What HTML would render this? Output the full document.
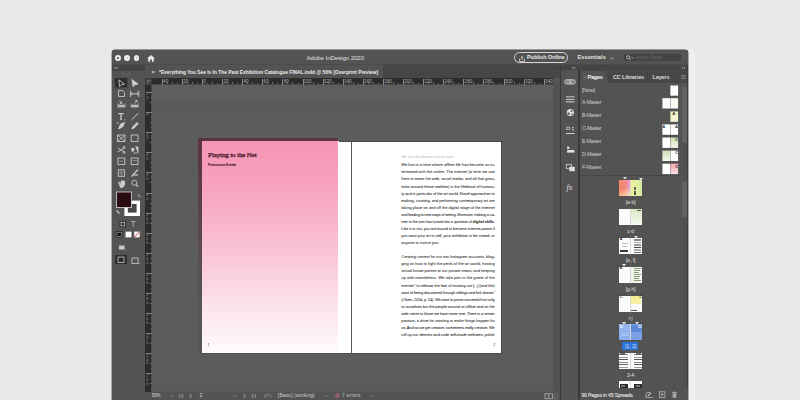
<!DOCTYPE html>
<html><head><meta charset="utf-8">
<style>
*{margin:0;padding:0;box-sizing:border-box}
html,body{width:800px;height:400px;overflow:hidden;background:#e8e8e8;font-family:"Liberation Sans",sans-serif}
.a{position:absolute}
.t{position:absolute;white-space:nowrap;line-height:1}
svg{position:absolute;overflow:visible}
</style></head><body>
<div class="a" style="left:110.6px;top:48.8px;width:584px;height:352px;border-radius:4px 4px 0 0;background:#efefef"></div>
<div class="a" style="left:111.6px;top:49.8px;width:576.7px;height:350.2px;background:#535353;border-radius:3px 3px 0 0;box-shadow:0 0 0 0.4px #444"></div>
<div class="a" style="left:112px;top:64.3px;width:576.3px;height:0.7px;background:#4b4b4b;"></div>
<div class="a" style="left:115.35px;top:55.1px;width:5.8px;height:5.8px;border-radius:50%;background:#ededed"></div>
<div class="a" style="left:124.39999999999999px;top:55.1px;width:5.8px;height:5.8px;border-radius:50%;background:#ededed"></div>
<div class="a" style="left:133.5px;top:55.1px;width:5.8px;height:5.8px;border-radius:50%;background:#ededed"></div>
<div class="a" style="left:117.4px;top:57.2px;width:1.7px;height:1.7px;border-radius:50%;background:#5a5a5a"></div>
<div class="a" style="left:126.6px;top:57.4px;width:1.4px;height:1.2px;background:#c8c8c8"></div>
<div class="a" style="left:135.7px;top:57.4px;width:1.4px;height:1.2px;background:#c8c8c8"></div>
<svg style="left:147.2px;top:54.6px" width="8" height="7" viewBox="0 0 8 7"><path d="M4 0 L8 3.6 L6.8 3.6 L6.8 6.7 L4.9 6.7 L4.9 4.6 L3.1 4.6 L3.1 6.7 L1.2 6.7 L1.2 3.6 L0 3.6 Z" fill="#e8e8e8"/></svg>
<div class="t" style="left:306.60px;top:54.52px;font-size:6.0px;color:#e2e2e2;letter-spacing:-0.018px;">Adobe InDesign 2020</div>
<div class="a" style="left:513.9px;top:51.9px;width:54.5px;height:11.6px;border:0.9px solid #d6d6d6;border-radius:6px"></div>
<svg style="left:518.6px;top:55.6px" width="6" height="6" viewBox="0 0 6 6"><path d="M0.5 2.8 V5.5 H5.5 V2.8 M3 4 V0.5 M1.7 1.7 L3 0.5 L4.3 1.7" stroke="#d8d8d8" stroke-width="0.75" fill="none"/></svg>
<div class="t" style="left:527.00px;top:55.23px;font-size:5.4px;color:#ececec;font-weight:bold;letter-spacing:-0.001px;">Publish Online</div>
<div class="t" style="left:577.50px;top:55.06px;font-size:5.6px;color:#e6e6e6;font-weight:bold;letter-spacing:0.064px;">Essentials</div>
<svg style="left:609.5px;top:57.2px" width="4" height="3" viewBox="0 0 4 3"><path d="M0.3 0.5 L2 2.2 L3.7 0.5" stroke="#cfcfcf" stroke-width="0.7" fill="none"/></svg>
<div class="a" style="left:624px;top:53.8px;width:57.2px;height:7.6px;background:#434343;border-radius:1px"></div>
<svg style="left:625.5px;top:55px" width="9" height="6" viewBox="0 0 9 6"><circle cx="2.3" cy="2.3" r="1.6" stroke="#d6d6d6" stroke-width="0.75" fill="none"/><path d="M3.4 3.4 L4.7 4.8 M5.6 2.3 L6.5 3.2 L7.4 2.3" stroke="#d6d6d6" stroke-width="0.7" fill="none"/></svg>
<div class="t" style="left:635.00px;top:55.37px;font-size:5.0px;color:#6a6a6a;letter-spacing:-0.136px;">Adobe Stock</div>
<div class="a" style="left:112px;top:65px;width:33px;height:5.5px;background:#454545;"></div>
<div class="t" style="left:114.30px;top:64.94px;font-size:5.5px;color:#b0b0b0;font-weight:bold;">‹‹</div>
<div class="t" style="left:121.50px;top:72.44px;font-size:4.2px;color:#6e6e6e;">Tools</div>
<div class="a" style="left:144.5px;top:65px;width:0.8px;height:335px;background:#3f3f3f;"></div>
<svg style="left:112px;top:76px" width="33" height="195" viewBox="0 0 33 195">
 <g fill="none" stroke="#cdcdcd" stroke-width="0.85">
  <rect x="3" y="2" width="12.3" height="9.4" fill="#2c2c2c" stroke="none"/>
  <path d="M6.8 3.8 L12.6 8.2 L9.6 8.6 L7.6 10.6 Z"/>
  <path d="M20 3.6 L26 8.1 L23 8.6 L21.2 10.8 Z" fill="#cdcdcd"/>
  <!-- page tool -->
  <path d="M6.5 14.5 H10.5 L12.5 16.5 V20.5 H6.5 Z"/>
  <!-- gap tool -->
  <path d="M18.5 14.5 V21 M26.8 14.5 V21 M19 17.8 H26.3 M20.5 16.5 L19 17.8 L20.5 19.1 M24.8 16.5 L26.3 17.8 L24.8 19.1"/>
  <!-- collector -->
  <path d="M6 27.5 V31 H13 V27.5" stroke-width="0.8"/><rect x="6.6" y="28.8" width="5.8" height="1.8" fill="#cdcdcd" stroke="none"/>
  <path d="M7.3 24.6 L9.6 27.4 M9.6 25.6 V27.4 H7.8" stroke-width="0.9"/>
  <path d="M19.2 27.5 V31 H26.2 V27.5" stroke-width="0.8"/><rect x="19.8" y="28.8" width="5.8" height="1.8" fill="#cdcdcd" stroke="none"/>
  <path d="M22.6 27.4 L25 24.6 M23.2 24.6 H25 V26.4" stroke-width="0.9"/>
  <!-- type -->
  <path d="M6.3 37.6 H11.7 M9 37.6 V43.6" stroke-width="1.3"/><path d="M7.9 43.6 H10.1" stroke-width="0.7"/><rect x="12.6" y="43.4" width="0.9" height="0.9" fill="#ccc" stroke="none"/>
  <path d="M19.6 43.8 L26.3 37.2" stroke-width="1"/>
  <!-- pen -->
  <path d="M6.5 53 L8.5 48 L12.5 46.5 L11 50.5 Z" fill="#cdcdcd"/><path d="M4.5 47 H7"/>
  <path d="M19.8 53 L20.5 51 L25 46.5 L26.3 47.8 L21.8 52.3 Z" fill="#cdcdcd"/>
  <!-- frame X -->
  <path d="M5.5 59 H13 V65.5 H5.5 Z M5.5 59 L13 65.5 M13 59 L5.5 65.5"/>
  <rect x="19.2" y="59" width="6.8" height="6.5"/>
  <!-- scissors -->
  <path d="M5.5 72 L12.5 76 M5.5 76 L12.5 72"/><circle cx="12" cy="71.5" r="1" /><circle cx="12" cy="76.5" r="1"/>
  <path d="M19.5 72 L22.5 73 L20.5 76 Z M23.5 71 H26 V77 M21.5 77 H25.5" fill="#cdcdcd"/>
  <!-- gradient -->
  <rect x="6" y="82" width="6.8" height="6.5"/><path d="M7.5 85.2 H11.3" stroke="#999"/>
  <rect x="19.2" y="82" width="6.8" height="6.5"/><path d="M20.5 84.5 H25" stroke="#999"/>
  <!-- note -->
  <rect x="6.3" y="93.8" width="6.2" height="6.5"/><path d="M7.5 96 H11.3 M7.5 98 H11.3 M9.3 94.5 V99.8" stroke="#aaa" stroke-width="0.6"/>
  <path d="M19.5 100.5 L24.5 95 L26 93.5 M21 99 L26 98.8" stroke-width="1.2"/>
  <!-- hand -->
  <path d="M6.5 105.8 L9 108.5 V105 H12.5 V109 L10.5 111.5 H8.5 Z" fill="#cdcdcd"/>
  <circle cx="22.3" cy="106.8" r="2.5"/><path d="M24 108.6 L26 110.6" stroke-width="1.2"/>
 </g>
 <!-- fill & stroke -->
 <rect x="12.4" y="124.6" width="15.6" height="15.4" fill="#ffffff"/>
 <rect x="15.8" y="128" width="8.8" height="8.6" fill="#474747"/>
 <rect x="4.4" y="116" width="15.2" height="15.4" fill="#2a0c12" stroke="#d8d8d8" stroke-width="0.8"/>
 <path d="M25.5 119 Q28 118.5 28 121.5" stroke="#ccc" stroke-width="0.8" fill="none"/>
 <path d="M4.5 134.5 L7.5 137.5" stroke="#ccc" stroke-width="1.2"/>
 <!-- formatting -->
 <rect x="7.5" y="145.2" width="6.7" height="6" fill="#303030"/>
 <rect x="9" y="146.5" width="3.7" height="3.4" fill="none" stroke="#ccc" stroke-width="0.7"/>
 <path d="M19 145.5 H23.5 M21.2 145.5 V151" stroke="#aaa" stroke-width="1"/>
 <!-- apply -->
 <rect x="3.7" y="155" width="6.8" height="6.7" fill="#303030"/>
 <rect x="5" y="156.3" width="4.2" height="4.1" fill="#111" stroke="#bbb" stroke-width="0.5"/>
 <rect x="13.5" y="155.6" width="6" height="5.8" fill="#fafafa"/>
 <rect x="22.2" y="155.6" width="5.5" height="5.8" fill="#fafafa"/>
 <path d="M22.4 161.2 L27.6 155.8" stroke="#d03030" stroke-width="0.9"/>
 <!-- screen mode -->
 <rect x="7" y="169" width="5.5" height="4.5" fill="#cfcfcf"/><rect x="7" y="169" width="5.5" height="1.2" fill="#8a8a8a"/><rect x="13.5" y="173.5" width="0.9" height="0.9" fill="#bbb"/>
 <!-- view mode -->
 <rect x="3.3" y="179" width="11.7" height="9" fill="#2c2c2c"/>
 <rect x="6" y="181" width="6" height="5.5" fill="none" stroke="#ccc" stroke-width="0.8"/>
 <rect x="20" y="182" width="6" height="5.5" fill="none" stroke="#ccc" stroke-width="0.8"/>
 <rect x="26.5" y="187" width="1" height="1" fill="#ccc"/>
</svg>
<div class="a" style="left:145.3px;top:65px;width:415px;height:13px;background:#464646;"></div>
<div class="a" style="left:145.3px;top:65px;width:237.7px;height:13px;background:#535353;"></div>
<div class="t" style="left:151.50px;top:69.86px;font-size:5.6px;color:#cfcfcf;font-weight:bold;">×</div>
<div class="t" style="left:159.20px;top:70.16px;font-size:5.6px;color:#ececec;font-weight:bold;transform:scaleX(0.8652);transform-origin:0 0;">*Everything You See Is In The Past Exhibition Catalogue FINAL.indd @ 50% [Overprint Preview]</div>
<div class="a" style="left:145.3px;top:78px;width:407.7px;height:7px;background:#2c2c2c;"></div>
<div class="a" style="left:145.3px;top:78px;width:6.7px;height:314px;background:#2c2c2c;"></div>
<div class="a" style="left:152px;top:84.4px;width:401px;height:0.6px;background:#4a4a4a;"></div>
<div class="a" style="left:145.3px;top:78px;width:6.7px;height:7px;background:#3e3e3e;"></div>
<svg style="left:146.3px;top:79px" width="5" height="5" viewBox="0 0 5 5"><path d="M0.5 2 H4.5 M2 0.5 V4.5 M0.5 4 H2 M4 0.5 V2" stroke="#8a8a8a" stroke-width="0.6" fill="none"/></svg>
<div class="a" style="left:151.4px;top:85px;width:0.6px;height:307px;background:#4a4a4a;"></div>
<div class="a" style="left:161.8px;top:78.5px;width:0.6px;height:6px;background:#8a8a8a;"></div>
<div class="t" style="left:163.10px;top:79.71px;font-size:4.6px;color:#b0b0b0;">40</div>
<div class="a" style="left:166.8px;top:83.2px;width:0.5px;height:1.2px;background:#6a6a6a;"></div>
<div class="a" style="left:171.8px;top:82.4px;width:0.5px;height:2px;background:#6a6a6a;"></div>
<div class="a" style="left:176.9px;top:83.2px;width:0.5px;height:1.2px;background:#6a6a6a;"></div>
<div class="a" style="left:181.9px;top:78.5px;width:0.6px;height:6px;background:#8a8a8a;"></div>
<div class="t" style="left:183.20px;top:79.71px;font-size:4.6px;color:#b0b0b0;">20</div>
<div class="a" style="left:186.9px;top:83.2px;width:0.5px;height:1.2px;background:#6a6a6a;"></div>
<div class="a" style="left:191.9px;top:82.4px;width:0.5px;height:2px;background:#6a6a6a;"></div>
<div class="a" style="left:197.0px;top:83.2px;width:0.5px;height:1.2px;background:#6a6a6a;"></div>
<div class="a" style="left:202.0px;top:78.5px;width:0.6px;height:6px;background:#8a8a8a;"></div>
<div class="t" style="left:203.30px;top:79.71px;font-size:4.6px;color:#b0b0b0;">0</div>
<div class="a" style="left:207.0px;top:83.2px;width:0.5px;height:1.2px;background:#6a6a6a;"></div>
<div class="a" style="left:212.0px;top:82.4px;width:0.5px;height:2px;background:#6a6a6a;"></div>
<div class="a" style="left:217.1px;top:83.2px;width:0.5px;height:1.2px;background:#6a6a6a;"></div>
<div class="a" style="left:222.1px;top:78.5px;width:0.6px;height:6px;background:#8a8a8a;"></div>
<div class="t" style="left:223.40px;top:79.71px;font-size:4.6px;color:#b0b0b0;">20</div>
<div class="a" style="left:227.1px;top:83.2px;width:0.5px;height:1.2px;background:#6a6a6a;"></div>
<div class="a" style="left:232.1px;top:82.4px;width:0.5px;height:2px;background:#6a6a6a;"></div>
<div class="a" style="left:237.2px;top:83.2px;width:0.5px;height:1.2px;background:#6a6a6a;"></div>
<div class="a" style="left:242.2px;top:78.5px;width:0.6px;height:6px;background:#8a8a8a;"></div>
<div class="t" style="left:243.50px;top:79.71px;font-size:4.6px;color:#b0b0b0;">40</div>
<div class="a" style="left:247.2px;top:83.2px;width:0.5px;height:1.2px;background:#6a6a6a;"></div>
<div class="a" style="left:252.2px;top:82.4px;width:0.5px;height:2px;background:#6a6a6a;"></div>
<div class="a" style="left:257.3px;top:83.2px;width:0.5px;height:1.2px;background:#6a6a6a;"></div>
<div class="a" style="left:262.3px;top:78.5px;width:0.6px;height:6px;background:#8a8a8a;"></div>
<div class="t" style="left:263.60px;top:79.71px;font-size:4.6px;color:#b0b0b0;">60</div>
<div class="a" style="left:267.3px;top:83.2px;width:0.5px;height:1.2px;background:#6a6a6a;"></div>
<div class="a" style="left:272.3px;top:82.4px;width:0.5px;height:2px;background:#6a6a6a;"></div>
<div class="a" style="left:277.4px;top:83.2px;width:0.5px;height:1.2px;background:#6a6a6a;"></div>
<div class="a" style="left:282.4px;top:78.5px;width:0.6px;height:6px;background:#8a8a8a;"></div>
<div class="t" style="left:283.70px;top:79.71px;font-size:4.6px;color:#b0b0b0;">80</div>
<div class="a" style="left:287.4px;top:83.2px;width:0.5px;height:1.2px;background:#6a6a6a;"></div>
<div class="a" style="left:292.4px;top:82.4px;width:0.5px;height:2px;background:#6a6a6a;"></div>
<div class="a" style="left:297.5px;top:83.2px;width:0.5px;height:1.2px;background:#6a6a6a;"></div>
<div class="a" style="left:302.5px;top:78.5px;width:0.6px;height:6px;background:#8a8a8a;"></div>
<div class="t" style="left:303.80px;top:79.71px;font-size:4.6px;color:#b0b0b0;">100</div>
<div class="a" style="left:307.5px;top:83.2px;width:0.5px;height:1.2px;background:#6a6a6a;"></div>
<div class="a" style="left:312.5px;top:82.4px;width:0.5px;height:2px;background:#6a6a6a;"></div>
<div class="a" style="left:317.6px;top:83.2px;width:0.5px;height:1.2px;background:#6a6a6a;"></div>
<div class="a" style="left:322.6px;top:78.5px;width:0.6px;height:6px;background:#8a8a8a;"></div>
<div class="t" style="left:323.90px;top:79.71px;font-size:4.6px;color:#b0b0b0;">120</div>
<div class="a" style="left:327.6px;top:83.2px;width:0.5px;height:1.2px;background:#6a6a6a;"></div>
<div class="a" style="left:332.6px;top:82.4px;width:0.5px;height:2px;background:#6a6a6a;"></div>
<div class="a" style="left:337.7px;top:83.2px;width:0.5px;height:1.2px;background:#6a6a6a;"></div>
<div class="a" style="left:342.7px;top:78.5px;width:0.6px;height:6px;background:#8a8a8a;"></div>
<div class="t" style="left:344.00px;top:79.71px;font-size:4.6px;color:#b0b0b0;">140</div>
<div class="a" style="left:347.7px;top:83.2px;width:0.5px;height:1.2px;background:#6a6a6a;"></div>
<div class="a" style="left:352.7px;top:82.4px;width:0.5px;height:2px;background:#6a6a6a;"></div>
<div class="a" style="left:357.8px;top:83.2px;width:0.5px;height:1.2px;background:#6a6a6a;"></div>
<div class="a" style="left:362.8px;top:78.5px;width:0.6px;height:6px;background:#8a8a8a;"></div>
<div class="t" style="left:364.10px;top:79.71px;font-size:4.6px;color:#b0b0b0;">160</div>
<div class="a" style="left:367.8px;top:83.2px;width:0.5px;height:1.2px;background:#6a6a6a;"></div>
<div class="a" style="left:372.8px;top:82.4px;width:0.5px;height:2px;background:#6a6a6a;"></div>
<div class="a" style="left:377.9px;top:83.2px;width:0.5px;height:1.2px;background:#6a6a6a;"></div>
<div class="a" style="left:382.9px;top:78.5px;width:0.6px;height:6px;background:#8a8a8a;"></div>
<div class="t" style="left:384.20px;top:79.71px;font-size:4.6px;color:#b0b0b0;">180</div>
<div class="a" style="left:387.9px;top:83.2px;width:0.5px;height:1.2px;background:#6a6a6a;"></div>
<div class="a" style="left:392.9px;top:82.4px;width:0.5px;height:2px;background:#6a6a6a;"></div>
<div class="a" style="left:398.0px;top:83.2px;width:0.5px;height:1.2px;background:#6a6a6a;"></div>
<div class="a" style="left:403.0px;top:78.5px;width:0.6px;height:6px;background:#8a8a8a;"></div>
<div class="t" style="left:404.30px;top:79.71px;font-size:4.6px;color:#b0b0b0;">200</div>
<div class="a" style="left:408.0px;top:83.2px;width:0.5px;height:1.2px;background:#6a6a6a;"></div>
<div class="a" style="left:413.0px;top:82.4px;width:0.5px;height:2px;background:#6a6a6a;"></div>
<div class="a" style="left:418.1px;top:83.2px;width:0.5px;height:1.2px;background:#6a6a6a;"></div>
<div class="a" style="left:423.1px;top:78.5px;width:0.6px;height:6px;background:#8a8a8a;"></div>
<div class="t" style="left:424.40px;top:79.71px;font-size:4.6px;color:#b0b0b0;">220</div>
<div class="a" style="left:428.1px;top:83.2px;width:0.5px;height:1.2px;background:#6a6a6a;"></div>
<div class="a" style="left:433.1px;top:82.4px;width:0.5px;height:2px;background:#6a6a6a;"></div>
<div class="a" style="left:438.2px;top:83.2px;width:0.5px;height:1.2px;background:#6a6a6a;"></div>
<div class="a" style="left:443.2px;top:78.5px;width:0.6px;height:6px;background:#8a8a8a;"></div>
<div class="t" style="left:444.50px;top:79.71px;font-size:4.6px;color:#b0b0b0;">240</div>
<div class="a" style="left:448.2px;top:83.2px;width:0.5px;height:1.2px;background:#6a6a6a;"></div>
<div class="a" style="left:453.2px;top:82.4px;width:0.5px;height:2px;background:#6a6a6a;"></div>
<div class="a" style="left:458.3px;top:83.2px;width:0.5px;height:1.2px;background:#6a6a6a;"></div>
<div class="a" style="left:463.3px;top:78.5px;width:0.6px;height:6px;background:#8a8a8a;"></div>
<div class="t" style="left:464.60px;top:79.71px;font-size:4.6px;color:#b0b0b0;">260</div>
<div class="a" style="left:468.3px;top:83.2px;width:0.5px;height:1.2px;background:#6a6a6a;"></div>
<div class="a" style="left:473.3px;top:82.4px;width:0.5px;height:2px;background:#6a6a6a;"></div>
<div class="a" style="left:478.4px;top:83.2px;width:0.5px;height:1.2px;background:#6a6a6a;"></div>
<div class="a" style="left:483.4px;top:78.5px;width:0.6px;height:6px;background:#8a8a8a;"></div>
<div class="t" style="left:484.70px;top:79.71px;font-size:4.6px;color:#b0b0b0;">280</div>
<div class="a" style="left:488.4px;top:83.2px;width:0.5px;height:1.2px;background:#6a6a6a;"></div>
<div class="a" style="left:493.4px;top:82.4px;width:0.5px;height:2px;background:#6a6a6a;"></div>
<div class="a" style="left:498.5px;top:83.2px;width:0.5px;height:1.2px;background:#6a6a6a;"></div>
<div class="a" style="left:503.5px;top:78.5px;width:0.6px;height:6px;background:#8a8a8a;"></div>
<div class="t" style="left:504.80px;top:79.71px;font-size:4.6px;color:#b0b0b0;">300</div>
<div class="a" style="left:508.5px;top:83.2px;width:0.5px;height:1.2px;background:#6a6a6a;"></div>
<div class="a" style="left:513.5px;top:82.4px;width:0.5px;height:2px;background:#6a6a6a;"></div>
<div class="a" style="left:518.6px;top:83.2px;width:0.5px;height:1.2px;background:#6a6a6a;"></div>
<div class="a" style="left:523.6px;top:78.5px;width:0.6px;height:6px;background:#8a8a8a;"></div>
<div class="t" style="left:524.90px;top:79.71px;font-size:4.6px;color:#b0b0b0;">320</div>
<div class="a" style="left:528.6px;top:83.2px;width:0.5px;height:1.2px;background:#6a6a6a;"></div>
<div class="a" style="left:533.6px;top:82.4px;width:0.5px;height:2px;background:#6a6a6a;"></div>
<div class="a" style="left:538.7px;top:83.2px;width:0.5px;height:1.2px;background:#6a6a6a;"></div>
<div class="a" style="left:543.7px;top:78.5px;width:0.6px;height:6px;background:#8a8a8a;"></div>
<div class="t" style="left:545.00px;top:79.71px;font-size:4.6px;color:#b0b0b0;">340</div>
<div class="a" style="left:548.7px;top:83.2px;width:0.5px;height:1.2px;background:#6a6a6a;"></div>
<div class="a" style="left:145.5px;top:92.0px;width:6.5px;height:0.6px;background:#808080;"></div>
<div class="a" style="left:150.6px;top:97.0px;width:1.4px;height:0.5px;background:#6a6a6a;"></div>
<div class="a" style="left:149.8px;top:102.0px;width:2.2px;height:0.5px;background:#6a6a6a;"></div>
<div class="a" style="left:150.6px;top:107.1px;width:1.4px;height:0.5px;background:#6a6a6a;"></div>
<div class="t" style="left:146.20px;top:93.38px;font-size:3.8px;color:#9a9a9a;">2</div>
<div class="t" style="left:146.20px;top:97.28px;font-size:3.8px;color:#9a9a9a;">0</div>
<div class="a" style="left:145.5px;top:112.1px;width:6.5px;height:0.6px;background:#808080;"></div>
<div class="a" style="left:150.6px;top:117.1px;width:1.4px;height:0.5px;background:#6a6a6a;"></div>
<div class="a" style="left:149.8px;top:122.1px;width:2.2px;height:0.5px;background:#6a6a6a;"></div>
<div class="a" style="left:150.6px;top:127.2px;width:1.4px;height:0.5px;background:#6a6a6a;"></div>
<div class="t" style="left:146.20px;top:113.48px;font-size:3.8px;color:#9a9a9a;">0</div>
<div class="a" style="left:145.5px;top:132.2px;width:6.5px;height:0.6px;background:#808080;"></div>
<div class="a" style="left:150.6px;top:137.2px;width:1.4px;height:0.5px;background:#6a6a6a;"></div>
<div class="a" style="left:149.8px;top:142.2px;width:2.2px;height:0.5px;background:#6a6a6a;"></div>
<div class="a" style="left:150.6px;top:147.3px;width:1.4px;height:0.5px;background:#6a6a6a;"></div>
<div class="t" style="left:146.20px;top:133.58px;font-size:3.8px;color:#9a9a9a;">2</div>
<div class="t" style="left:146.20px;top:137.48px;font-size:3.8px;color:#9a9a9a;">0</div>
<div class="a" style="left:145.5px;top:152.3px;width:6.5px;height:0.6px;background:#808080;"></div>
<div class="a" style="left:150.6px;top:157.3px;width:1.4px;height:0.5px;background:#6a6a6a;"></div>
<div class="a" style="left:149.8px;top:162.3px;width:2.2px;height:0.5px;background:#6a6a6a;"></div>
<div class="a" style="left:150.6px;top:167.4px;width:1.4px;height:0.5px;background:#6a6a6a;"></div>
<div class="t" style="left:146.20px;top:153.68px;font-size:3.8px;color:#9a9a9a;">4</div>
<div class="t" style="left:146.20px;top:157.58px;font-size:3.8px;color:#9a9a9a;">0</div>
<div class="a" style="left:145.5px;top:172.4px;width:6.5px;height:0.6px;background:#808080;"></div>
<div class="a" style="left:150.6px;top:177.4px;width:1.4px;height:0.5px;background:#6a6a6a;"></div>
<div class="a" style="left:149.8px;top:182.4px;width:2.2px;height:0.5px;background:#6a6a6a;"></div>
<div class="a" style="left:150.6px;top:187.5px;width:1.4px;height:0.5px;background:#6a6a6a;"></div>
<div class="t" style="left:146.20px;top:173.78px;font-size:3.8px;color:#9a9a9a;">6</div>
<div class="t" style="left:146.20px;top:177.68px;font-size:3.8px;color:#9a9a9a;">0</div>
<div class="a" style="left:145.5px;top:192.5px;width:6.5px;height:0.6px;background:#808080;"></div>
<div class="a" style="left:150.6px;top:197.5px;width:1.4px;height:0.5px;background:#6a6a6a;"></div>
<div class="a" style="left:149.8px;top:202.5px;width:2.2px;height:0.5px;background:#6a6a6a;"></div>
<div class="a" style="left:150.6px;top:207.6px;width:1.4px;height:0.5px;background:#6a6a6a;"></div>
<div class="t" style="left:146.20px;top:193.88px;font-size:3.8px;color:#9a9a9a;">8</div>
<div class="t" style="left:146.20px;top:197.78px;font-size:3.8px;color:#9a9a9a;">0</div>
<div class="a" style="left:145.5px;top:212.6px;width:6.5px;height:0.6px;background:#808080;"></div>
<div class="a" style="left:150.6px;top:217.6px;width:1.4px;height:0.5px;background:#6a6a6a;"></div>
<div class="a" style="left:149.8px;top:222.6px;width:2.2px;height:0.5px;background:#6a6a6a;"></div>
<div class="a" style="left:150.6px;top:227.7px;width:1.4px;height:0.5px;background:#6a6a6a;"></div>
<div class="t" style="left:146.20px;top:213.98px;font-size:3.8px;color:#9a9a9a;">1</div>
<div class="t" style="left:146.20px;top:217.88px;font-size:3.8px;color:#9a9a9a;">0</div>
<div class="t" style="left:146.20px;top:221.78px;font-size:3.8px;color:#9a9a9a;">0</div>
<div class="a" style="left:145.5px;top:232.7px;width:6.5px;height:0.6px;background:#808080;"></div>
<div class="a" style="left:150.6px;top:237.7px;width:1.4px;height:0.5px;background:#6a6a6a;"></div>
<div class="a" style="left:149.8px;top:242.7px;width:2.2px;height:0.5px;background:#6a6a6a;"></div>
<div class="a" style="left:150.6px;top:247.8px;width:1.4px;height:0.5px;background:#6a6a6a;"></div>
<div class="t" style="left:146.20px;top:234.08px;font-size:3.8px;color:#9a9a9a;">1</div>
<div class="t" style="left:146.20px;top:237.98px;font-size:3.8px;color:#9a9a9a;">2</div>
<div class="t" style="left:146.20px;top:241.88px;font-size:3.8px;color:#9a9a9a;">0</div>
<div class="a" style="left:145.5px;top:252.8px;width:6.5px;height:0.6px;background:#808080;"></div>
<div class="a" style="left:150.6px;top:257.8px;width:1.4px;height:0.5px;background:#6a6a6a;"></div>
<div class="a" style="left:149.8px;top:262.8px;width:2.2px;height:0.5px;background:#6a6a6a;"></div>
<div class="a" style="left:150.6px;top:267.9px;width:1.4px;height:0.5px;background:#6a6a6a;"></div>
<div class="t" style="left:146.20px;top:254.18px;font-size:3.8px;color:#9a9a9a;">1</div>
<div class="t" style="left:146.20px;top:258.08px;font-size:3.8px;color:#9a9a9a;">4</div>
<div class="t" style="left:146.20px;top:261.98px;font-size:3.8px;color:#9a9a9a;">0</div>
<div class="a" style="left:145.5px;top:272.9px;width:6.5px;height:0.6px;background:#808080;"></div>
<div class="a" style="left:150.6px;top:277.9px;width:1.4px;height:0.5px;background:#6a6a6a;"></div>
<div class="a" style="left:149.8px;top:282.9px;width:2.2px;height:0.5px;background:#6a6a6a;"></div>
<div class="a" style="left:150.6px;top:288.0px;width:1.4px;height:0.5px;background:#6a6a6a;"></div>
<div class="t" style="left:146.20px;top:274.28px;font-size:3.8px;color:#9a9a9a;">1</div>
<div class="t" style="left:146.20px;top:278.18px;font-size:3.8px;color:#9a9a9a;">6</div>
<div class="t" style="left:146.20px;top:282.08px;font-size:3.8px;color:#9a9a9a;">0</div>
<div class="a" style="left:145.5px;top:293.0px;width:6.5px;height:0.6px;background:#808080;"></div>
<div class="a" style="left:150.6px;top:298.0px;width:1.4px;height:0.5px;background:#6a6a6a;"></div>
<div class="a" style="left:149.8px;top:303.0px;width:2.2px;height:0.5px;background:#6a6a6a;"></div>
<div class="a" style="left:150.6px;top:308.1px;width:1.4px;height:0.5px;background:#6a6a6a;"></div>
<div class="t" style="left:146.20px;top:294.38px;font-size:3.8px;color:#9a9a9a;">1</div>
<div class="t" style="left:146.20px;top:298.28px;font-size:3.8px;color:#9a9a9a;">8</div>
<div class="t" style="left:146.20px;top:302.18px;font-size:3.8px;color:#9a9a9a;">0</div>
<div class="a" style="left:145.5px;top:313.1px;width:6.5px;height:0.6px;background:#808080;"></div>
<div class="a" style="left:150.6px;top:318.1px;width:1.4px;height:0.5px;background:#6a6a6a;"></div>
<div class="a" style="left:149.8px;top:323.1px;width:2.2px;height:0.5px;background:#6a6a6a;"></div>
<div class="a" style="left:150.6px;top:328.2px;width:1.4px;height:0.5px;background:#6a6a6a;"></div>
<div class="t" style="left:146.20px;top:314.48px;font-size:3.8px;color:#9a9a9a;">2</div>
<div class="t" style="left:146.20px;top:318.38px;font-size:3.8px;color:#9a9a9a;">0</div>
<div class="t" style="left:146.20px;top:322.28px;font-size:3.8px;color:#9a9a9a;">0</div>
<div class="a" style="left:145.5px;top:333.2px;width:6.5px;height:0.6px;background:#808080;"></div>
<div class="a" style="left:150.6px;top:338.2px;width:1.4px;height:0.5px;background:#6a6a6a;"></div>
<div class="a" style="left:149.8px;top:343.2px;width:2.2px;height:0.5px;background:#6a6a6a;"></div>
<div class="a" style="left:150.6px;top:348.3px;width:1.4px;height:0.5px;background:#6a6a6a;"></div>
<div class="t" style="left:146.20px;top:334.58px;font-size:3.8px;color:#9a9a9a;">2</div>
<div class="t" style="left:146.20px;top:338.48px;font-size:3.8px;color:#9a9a9a;">2</div>
<div class="t" style="left:146.20px;top:342.38px;font-size:3.8px;color:#9a9a9a;">0</div>
<div class="a" style="left:145.5px;top:353.3px;width:6.5px;height:0.6px;background:#808080;"></div>
<div class="a" style="left:150.6px;top:358.3px;width:1.4px;height:0.5px;background:#6a6a6a;"></div>
<div class="a" style="left:149.8px;top:363.3px;width:2.2px;height:0.5px;background:#6a6a6a;"></div>
<div class="a" style="left:150.6px;top:368.4px;width:1.4px;height:0.5px;background:#6a6a6a;"></div>
<div class="t" style="left:146.20px;top:354.68px;font-size:3.8px;color:#9a9a9a;">2</div>
<div class="t" style="left:146.20px;top:358.58px;font-size:3.8px;color:#9a9a9a;">4</div>
<div class="t" style="left:146.20px;top:362.48px;font-size:3.8px;color:#9a9a9a;">0</div>
<div class="a" style="left:145.5px;top:373.4px;width:6.5px;height:0.6px;background:#808080;"></div>
<div class="a" style="left:150.6px;top:378.4px;width:1.4px;height:0.5px;background:#6a6a6a;"></div>
<div class="a" style="left:149.8px;top:383.4px;width:2.2px;height:0.5px;background:#6a6a6a;"></div>
<div class="a" style="left:150.6px;top:388.5px;width:1.4px;height:0.5px;background:#6a6a6a;"></div>
<div class="t" style="left:146.20px;top:374.78px;font-size:3.8px;color:#9a9a9a;">2</div>
<div class="t" style="left:146.20px;top:378.68px;font-size:3.8px;color:#9a9a9a;">6</div>
<div class="t" style="left:146.20px;top:382.58px;font-size:3.8px;color:#9a9a9a;">0</div>
<div class="a" style="left:152px;top:85px;width:401px;height:298px;background:#5c5c5c;"></div>
<div class="a" style="left:152px;top:85px;width:401px;height:15px;background:#5e5e5e;"></div>
<div class="a" style="left:152px;top:100px;width:401px;height:12px;background:#5a5a5a;"></div>
<div class="a" style="left:553px;top:85px;width:7px;height:307px;background:#525252;"></div>
<div class="a" style="left:152px;top:383px;width:401px;height:9px;background:#595959;"></div>
<div class="a" style="left:198.4px;top:138.4px;width:140.1px;height:214.6px;background:#5b3544;"></div>
<div class="a" style="left:198.4px;top:141px;width:3.2px;height:212px;background:linear-gradient(#5b3544 0%,#5a3e4a 25%,#584c52 50%,#565656 80%,#555 100%)"></div>
<div class="a" style="left:201.5px;top:141.2px;width:299.5px;height:211.8px;background:#ffffff;"></div>
<div class="a" style="left:201.5px;top:141.3px;width:136.5px;height:211.7px;background:linear-gradient(180deg,#f695b6 0%,#f7a2bf 20%,#f9bbcf 45%,#fbd3df 65%,#fdebf1 85%,#fffbfc 100%)"></div>
<div class="a" style="left:351px;top:141px;width:0.9px;height:212px;background:#5a5a5a;"></div>
<div class="a" style="left:338.5px;top:140.5px;width:162.5px;height:0.8px;background:#474747;"></div>
<div class="a" style="left:501px;top:140.5px;width:0.8px;height:213px;background:#474747;"></div>
<div class="a" style="left:201.5px;top:353px;width:300.3px;height:0.8px;background:#4e4e4e;"></div>
<div class="t" style="left:208.10px;top:152.35px;font-size:7.1px;color:#3a1020;font-family:'Liberation Serif',serif;letter-spacing:-0.160px;-webkit-text-stroke:0.25px #3a1020;">Playing to the Net</div>
<div class="t" style="left:208.00px;top:163.64px;font-size:3.5px;color:#4a1a2a;font-weight:bold;letter-spacing:-0.026px;-webkit-text-stroke:0.08px #4a1a2a;">Francesca Kreda</div>
<div class="t" style="left:207.60px;top:343.75px;font-size:3.6px;color:#333;">1</div>
<div class="t" style="left:493.20px;top:344.45px;font-size:3.6px;color:#333;">2</div>
<div class="t" style="left:401.25px;top:155.30px;font-size:3.9px;color:#b2b2b2;letter-spacing:0.018px;">We are all internet artists now</div>
<div class="t" style="left:401.25px;top:163.29px;font-size:4.0px;color:#262626;letter-spacing:0.010px;-webkit-text-stroke:0.04px #333;">We live in a time where offline life has become so in-</div>
<div class="t" style="left:401.25px;top:170.37px;font-size:4.0px;color:#262626;letter-spacing:-0.008px;-webkit-text-stroke:0.04px #333;">tertwined with the online. The internet (a term we use</div>
<div class="t" style="left:401.25px;top:177.45px;font-size:4.0px;color:#262626;letter-spacing:-0.047px;-webkit-text-stroke:0.04px #333;">here to mean the web, social media, and all that gravi-</div>
<div class="t" style="left:401.25px;top:184.53px;font-size:4.0px;color:#262626;letter-spacing:-0.045px;-webkit-text-stroke:0.04px #333;">tates around these realities) is the lifeblood of humani-</div>
<div class="t" style="left:401.25px;top:191.61px;font-size:4.0px;color:#262626;letter-spacing:-0.099px;-webkit-text-stroke:0.04px #333;">ty and in particular of the art world. Novel approaches to</div>
<div class="t" style="left:401.25px;top:198.69px;font-size:4.0px;color:#262626;letter-spacing:-0.061px;-webkit-text-stroke:0.04px #333;">making, curating, and performing contemporary art are</div>
<div class="t" style="left:401.25px;top:205.77px;font-size:4.0px;color:#262626;letter-spacing:-0.024px;-webkit-text-stroke:0.04px #333;">taking place on and off the digital stage of the internet</div>
<div class="t" style="left:401.25px;top:212.85px;font-size:4.0px;color:#262626;letter-spacing:-0.208px;-webkit-text-stroke:0.04px #333;">and leading to new ways of seeing. Moreover, making a ca-</div>
<div class="t" style="left:401.25px;top:219.93px;font-size:4.0px;color:#262626;letter-spacing:-0.147px;-webkit-text-stroke:0.04px #333;">reer in the arts has turned into a question of <b>digital skills</b>.</div>
<div class="t" style="left:401.25px;top:227.01px;font-size:4.0px;color:#262626;letter-spacing:-0.100px;-webkit-text-stroke:0.04px #333;">Like it or not, you are bound to become internet-aware if</div>
<div class="t" style="left:401.25px;top:234.09px;font-size:4.0px;color:#262626;letter-spacing:-0.084px;-webkit-text-stroke:0.04px #333;">you want your art to sell, your exhibition to be visited, or</div>
<div class="t" style="left:401.25px;top:241.17px;font-size:4.0px;color:#262626;-webkit-text-stroke:0.04px #333;">anyone to notice you.</div>
<div class="t" style="left:401.25px;top:255.25px;font-size:4.0px;color:#262626;letter-spacing:-0.056px;-webkit-text-stroke:0.04px #333;">Creating content for our two Instagram accounts, blog-</div>
<div class="t" style="left:401.25px;top:262.33px;font-size:4.0px;color:#262626;letter-spacing:-0.021px;-webkit-text-stroke:0.04px #333;">ging on how to fight the perils of the art world, hosting</div>
<div class="t" style="left:401.25px;top:269.41px;font-size:4.0px;color:#262626;letter-spacing:-0.034px;-webkit-text-stroke:0.04px #333;">virtual house parties at our private views, and keeping</div>
<div class="t" style="left:401.25px;top:276.49px;font-size:4.0px;color:#262626;letter-spacing:0.031px;-webkit-text-stroke:0.04px #333;">up with newsletters. We take part in the game of the</div>
<div class="t" style="left:401.25px;top:283.57px;font-size:4.0px;color:#262626;letter-spacing:-0.069px;-webkit-text-stroke:0.04px #333;">internet “to release the fear of missing out [...] (and the)</div>
<div class="t" style="left:401.25px;top:290.65px;font-size:4.0px;color:#262626;letter-spacing:-0.160px;-webkit-text-stroke:0.04px #333;">want of being discovered through reblogs and link shares”</div>
<div class="t" style="left:401.25px;top:297.73px;font-size:4.0px;color:#262626;letter-spacing:-0.175px;-webkit-text-stroke:0.04px #333;">(Olsen, 2014, p. 14). We want to prove successful not only</div>
<div class="t" style="left:401.25px;top:304.81px;font-size:4.0px;color:#262626;letter-spacing:-0.093px;-webkit-text-stroke:0.04px #333;">to ourselves but the people around us offline and on the</div>
<div class="t" style="left:401.25px;top:311.89px;font-size:4.0px;color:#262626;letter-spacing:-0.167px;-webkit-text-stroke:0.04px #333;">web: never to those we have never met. There is a certain</div>
<div class="t" style="left:401.25px;top:318.97px;font-size:4.0px;color:#262626;letter-spacing:-0.047px;-webkit-text-stroke:0.04px #333;">passion, a drive for wanting to make things happen for</div>
<div class="t" style="left:401.25px;top:326.05px;font-size:4.0px;color:#262626;letter-spacing:-0.155px;-webkit-text-stroke:0.04px #333;">us. And so we get creative, sometimes really creative. We</div>
<div class="t" style="left:401.25px;top:333.13px;font-size:4.0px;color:#262626;letter-spacing:-0.084px;-webkit-text-stroke:0.04px #333;">roll up our sleeves and code self-made websites, polish</div>
<div class="a" style="left:145.3px;top:392px;width:415px;height:8px;background:#535353;"></div>
<div class="t" style="left:151.70px;top:393.74px;font-size:4.8px;color:#d6d6d6;letter-spacing:-0.415px;">50%</div>
<svg style="left:145px;top:392px" width="415" height="8" viewBox="0 0 415 8"><g stroke="#9a9a9a" stroke-width="0.7" fill="none"><path d="M25.5 3 L27 4.5 L28.5 3"/><rect x="53" y="1.3" width="40" height="5.6" rx="1" stroke="#5c5c5c" stroke-width="0.5"/><path d="M34.5 2 V6 M37.8 2 L35.6 4 L37.8 6 Z M46 2.2 L44 4 L46 5.8 Z"/><path d="M88.5 3 L90 4.5 L91.5 3"/><path d="M99 2.2 L101 4 L99 5.8 Z M107.2 2 L109.4 4 L107.2 6 Z M110.5 2 V6"/><path d="M119 6 Q119 2 123 2 Q126 2.5 126 6 M121 6 L123 3.5"/><path d="M180 3.2 L181.5 4.7 L183 3.2"/><path d="M225.5 3.2 L227 4.7 L228.5 3.2"/><rect x="400" y="1.8" width="7.5" height="5" stroke="#bbb"/><path d="M403.7 1.8 V6.8" stroke="#bbb"/><rect x="409.5" y="1.8" width="3" height="5" stroke="#777"/></g></svg>
<div class="t" style="left:199.70px;top:393.74px;font-size:4.8px;color:#dcdcdc;">2</div>
<div class="t" style="left:278.00px;top:393.74px;font-size:4.8px;color:#d0d0d0;letter-spacing:0.064px;">[Basic] (working)</div>
<svg style="left:334.8px;top:393.3px" width="5" height="5" viewBox="0 0 5 5"><circle cx="2.5" cy="2.5" r="1.9" fill="none" stroke="#b06078" stroke-width="0.9"/><path d="M2.5 0 V5 M0 2.5 H5" stroke="#b06078" stroke-width="0.6"/></svg>
<div class="t" style="left:342.00px;top:393.74px;font-size:4.8px;color:#cfcfcf;letter-spacing:0.278px;">7 errors</div>
<div class="a" style="left:553px;top:65px;width:135.3px;height:5.3px;background:#454545;"></div>
<div class="t" style="left:681.60px;top:64.94px;font-size:5.5px;color:#a8a8a8;font-weight:bold;">››</div>
<div class="t" style="left:571.80px;top:64.94px;font-size:5.5px;color:#a8a8a8;font-weight:bold;">‹‹</div>
<div class="a" style="left:560px;top:65px;width:0.9px;height:335px;background:#3a3a3a;"></div>
<div class="a" style="left:578.3px;top:70.3px;width:1.7px;height:330px;background:#3a3a3a;"></div>
<svg style="left:561px;top:70px" width="18" height="130" viewBox="0 0 18 130">
 <g stroke="#e0e0e0" fill="none" stroke-width="0.8">
  <path d="M6 9.8 H12 Q14.3 9.8 14.3 11.9 Q14.3 14 12 14 H6 Q3.7 14 3.7 11.9 Q3.7 9.8 6 9.8 Z" stroke-width="0.9"/>
  <ellipse cx="7.6" cy="11.9" rx="1.7" ry="1.1"/><ellipse cx="10.4" cy="11.9" rx="1.7" ry="1.1"/>
  <path d="M2.5 20.3 H15.5" stroke="#4a4a4a" stroke-width="0.6"/>
  <path d="M5 26.9 H13.5 M5 29.4 H13.5" stroke-width="0.9"/>
  <path d="M5 31.9 H13.5" stroke-width="1.1" stroke-dasharray="1.2 0.4"/>
  <circle cx="9.3" cy="42.5" r="3.6" fill="#e0e0e0" stroke="none"/>
  <circle cx="7.6" cy="43.6" r="1.2" fill="#535353" stroke="none"/><circle cx="10.6" cy="41" r="0.9" fill="#535353" stroke="none"/><circle cx="10.9" cy="44.2" r="0.8" fill="#535353" stroke="none"/>
  <path d="M2.5 51 H15.5" stroke="#4a4a4a" stroke-width="0.6"/>
  <ellipse cx="7.3" cy="58.3" rx="1.8" ry="1.3"/>
  <rect x="11.2" y="57" width="1.4" height="1.2" fill="#e0e0e0" stroke="none"/><rect x="11.2" y="59.2" width="1.4" height="1.2" fill="#e0e0e0" stroke="none"/>
  <path d="M5 63.5 H13.5" stroke-width="0.9"/>
  <path d="M2.5 69.5 H15.5" stroke="#4a4a4a" stroke-width="0.6"/>
  <rect x="6.1" y="76.6" width="2.2" height="2.4" fill="#e0e0e0" stroke="none"/>
  <rect x="6.1" y="80" width="7.3" height="2.6" fill="#e0e0e0" stroke="none"/>
  <path d="M2.5 88.5 H15.5" stroke="#4a4a4a" stroke-width="0.6"/>
  <rect x="5.3" y="94.3" width="5.2" height="4.2" stroke-width="0.7"/>
  <rect x="8.3" y="96.8" width="5.5" height="4.4" fill="#e0e0e0" stroke="none"/>
  <path d="M2.5 107.5 H15.5" stroke="#4a4a4a" stroke-width="0.6"/>
 </g>
 <text x="5.6" y="119.6" font-family="Liberation Serif" font-style="italic" font-size="8" fill="#e0e0e0">fx</text>
</svg>

<div class="a" style="left:580px;top:70.3px;width:108.3px;height:12.7px;background:#474747;"></div>
<div class="a" style="left:580.5px;top:71.2px;width:26.9px;height:11.8px;background:#535353;"></div>
<div class="a" style="left:647.2px;top:72px;width:0.6px;height:10px;background:#3e3e3e;"></div>
<div class="t" style="left:582.80px;top:76.45px;font-size:3.6px;color:#bbb;">◇</div>
<div class="t" style="left:587.40px;top:75.01px;font-size:5.6px;color:#f5f5f5;font-weight:bold;letter-spacing:-0.231px;">Pages</div>
<div class="t" style="left:613.00px;top:75.01px;font-size:5.6px;color:#d8d8d8;font-weight:bold;letter-spacing:-0.191px;">CC Libraries</div>
<div class="t" style="left:652.60px;top:75.01px;font-size:5.6px;color:#d8d8d8;font-weight:bold;letter-spacing:-0.217px;">Layers</div>
<svg style="left:681px;top:75.3px" width="5" height="4" viewBox="0 0 5 4"><path d="M0 0.5 H5 M0 2 H5 M0 3.5 H5" stroke="#8a8a8a" stroke-width="0.7"/></svg>
<div class="t" style="left:582.00px;top:87.81px;font-size:5.3px;color:#cdcdcd;letter-spacing:-0.516px;">[None]</div>
<div class="t" style="left:582.00px;top:100.31px;font-size:5.3px;color:#cdcdcd;letter-spacing:-0.281px;">A-Master</div>
<div class="t" style="left:582.00px;top:113.11px;font-size:5.3px;color:#cdcdcd;letter-spacing:-0.281px;">B-Master</div>
<div class="t" style="left:582.00px;top:126.11px;font-size:5.3px;color:#cdcdcd;letter-spacing:-0.322px;">C-Master</div>
<div class="t" style="left:582.00px;top:139.11px;font-size:5.3px;color:#cdcdcd;letter-spacing:-0.281px;">E-Master</div>
<div class="t" style="left:582.00px;top:151.91px;font-size:5.3px;color:#cdcdcd;letter-spacing:-0.322px;">D-Master</div>
<div class="t" style="left:582.00px;top:165.01px;font-size:5.3px;color:#cdcdcd;letter-spacing:-0.239px;">F-Master</div>
<svg style="left:660px;top:84px" width="20" height="90" viewBox="0 0 20 90">
 <defs>
  <linearGradient id="gg" x1="0" y1="0" x2="0" y2="1"><stop offset="0" stop-color="#cfe0b4"/><stop offset="1" stop-color="#f2f6ea"/></linearGradient>
  <linearGradient id="gy" x1="0" y1="0" x2="0" y2="1"><stop offset="0" stop-color="#f3f0b8"/><stop offset="1" stop-color="#f8f8e4"/></linearGradient>
  <linearGradient id="gp" x1="0" y1="0" x2="0" y2="1"><stop offset="0" stop-color="#f2a8ae"/><stop offset="1" stop-color="#fbe0e2"/></linearGradient>
 </defs>
 <rect x="10.4" y="1.5" width="7.7" height="10.2" fill="#fff"/>
 <rect x="2.4" y="14.2" width="7.6" height="10.3" fill="#fff"/><rect x="10.4" y="14.2" width="7.7" height="10.3" fill="#fbfbf5"/>
 <rect x="10.4" y="27.4" width="7.7" height="10.4" fill="url(#gy)"/><text x="12.3" y="31.3" font-size="4.2" font-weight="bold" font-family="Liberation Sans" fill="#333">A</text>
 <rect x="2.4" y="40.4" width="7.6" height="10.4" fill="#fff"/><rect x="10.4" y="40.4" width="7.7" height="10.4" fill="#fff"/>
 <text x="2.2" y="44" font-size="4.2" font-weight="bold" font-family="Liberation Sans" fill="#333">A</text><text x="15" y="44" font-size="4.2" font-weight="bold" font-family="Liberation Sans" fill="#333">A</text>
 <rect x="2.4" y="53.5" width="7.6" height="10.4" fill="#fff"/><rect x="10.4" y="53.5" width="7.7" height="10.4" fill="url(#gg)"/>
 <rect x="2.4" y="66.6" width="7.6" height="10.4" fill="url(#gg)"/><rect x="10.4" y="66.6" width="7.7" height="10.4" fill="#fff"/>
 <rect x="2.4" y="79.7" width="7.6" height="10.4" fill="#fff"/><rect x="10.4" y="79.7" width="7.7" height="10.4" fill="url(#gp)"/>
 <text x="15.3" y="57.3" font-size="4" font-weight="bold" font-family="Liberation Sans" fill="#222">C</text>
 <text x="15.3" y="70.4" font-size="4" font-weight="bold" font-family="Liberation Sans" fill="#222">C</text>
 <text x="15.3" y="83.5" font-size="4" font-weight="bold" font-family="Liberation Sans" fill="#222">C</text>
</svg>

<div class="a" style="left:580px;top:174.6px;width:100px;height:0.7px;background:#474747;"></div>
<div class="a" style="left:682px;top:84.5px;width:5.3px;height:90px;background:#505050;"></div>
<div class="a" style="left:682.4px;top:86px;width:4.5px;height:57px;background:#626262;border-radius:2px"></div>
<div class="a" style="left:682px;top:176px;width:5.3px;height:212.3px;background:#505050;"></div>
<div class="a" style="left:682.4px;top:181px;width:4.5px;height:36px;background:#626262;border-radius:2px"></div>
<div class="a" style="left:687.3px;top:65px;width:1px;height:335px;background:#3e3e3e;"></div>
<div class="a" style="left:619.10px;top:179.80px;width:11.55px;height:16.30px;background:linear-gradient(155deg,rgba(255,255,255,0) 50%,#f6e4b0 100%),linear-gradient(90deg,#f5896a 0%,#f4877a 50%,#e89cc6 85%,#eeb4c4 100%);"></div>
<div class="a" style="left:630.65px;top:179.80px;width:11.55px;height:16.30px;background:linear-gradient(90deg,#f2f098 0%,#e4f0a0 50%,#d2e8a4 100%);"></div>
<div class="a" style="left:634.25px;top:186.80px;width:1.50px;height:3.50px;background:#5a6658;"></div>
<div class="a" style="left:634.25px;top:191.30px;width:1.50px;height:3.50px;background:#4a5648;"></div>
<svg style="left:638.70px;top:178.00px" width="4" height="2.4" viewBox="0 0 4 2.4"><path d="M0 0 H4 L2 2.4 Z" fill="#e8e8e8"/></svg>
<svg style="left:622.60px;top:177.40px" width="4" height="2.4" viewBox="0 0 4 2.4"><path d="M0 0 H4 L2 2.4 Z" fill="#e8e8e8"/></svg>
<div class="a" style="left:630.45px;top:179.8px;width:0.4px;height:16.3px;background:#d8d8d8"></div>
<div class="a" style="left:630.40px;top:196.10px;width:0.50px;height:1.60px;background:#666;"></div>
<div class="t" style="left:625.75px;top:200.85px;font-size:4.9px;color:#e2e2e2;">[a-b]</div>
<div class="a" style="left:630.40px;top:206.30px;width:0.50px;height:2.50px;background:#666;"></div>
<div class="a" style="left:619.10px;top:208.80px;width:11.55px;height:16.30px;background:#fbfbfb;"></div>
<div class="a" style="left:630.65px;top:208.80px;width:11.55px;height:16.30px;background:linear-gradient(180deg,#d9e8c2 0%,#e8f0da 45%,#f7f8f2 100%);"></div>
<div class="a" style="left:637.20px;top:209.60px;width:4.20px;height:1.60px;background:#3e5a3a;"></div>
<div class="a" style="left:630.45px;top:208.8px;width:0.4px;height:16.3px;background:#d8d8d8"></div>
<div class="a" style="left:630.40px;top:225.10px;width:0.50px;height:1.60px;background:#666;"></div>
<div class="t" style="left:627.25px;top:229.85px;font-size:4.9px;color:#e2e2e2;">c-d</div>
<div class="a" style="left:630.40px;top:235.40px;width:0.50px;height:2.50px;background:#666;"></div>
<div class="a" style="left:619.10px;top:237.90px;width:23.10px;height:16.30px;background:#fbfbfb;"></div>
<div class="t" style="left:619.80px;top:238.30px;font-size:3.6px;font-weight:bold;color:#222">A</div>
<div class="a" style="left:622.10px;top:242.90px;width:6.00px;height:0.60px;background:#bbb;"></div>
<div class="a" style="left:622.10px;top:245.90px;width:5.00px;height:0.60px;background:#bbb;"></div>
<div class="a" style="left:620.10px;top:249.90px;width:7.50px;height:2.40px;background:#3a3a3a;"></div>
<div class="a" style="left:633.85px;top:239.10px;width:7.60px;height:1.50px;background:#888;"></div>
<div class="a" style="left:633.85px;top:241.60px;width:7.60px;height:1.50px;background:#aaa;"></div>
<div class="a" style="left:633.85px;top:244.10px;width:7.60px;height:1.50px;background:#999;"></div>
<div class="a" style="left:633.85px;top:246.60px;width:7.60px;height:1.50px;background:#444;"></div>
<div class="a" style="left:633.85px;top:249.10px;width:7.60px;height:1.50px;background:#aaa;"></div>
<div class="a" style="left:633.85px;top:251.60px;width:7.60px;height:1.50px;background:#777;"></div>
<svg style="left:634.15px;top:235.50px" width="4" height="2.4" viewBox="0 0 4 2.4"><path d="M0 0 H4 L2 2.4 Z" fill="#e8e8e8"/></svg>
<div class="a" style="left:630.45px;top:237.9px;width:0.4px;height:16.3px;background:#d8d8d8"></div>
<div class="a" style="left:630.40px;top:254.20px;width:0.50px;height:1.60px;background:#666;"></div>
<div class="t" style="left:625.89px;top:258.95px;font-size:4.9px;color:#e2e2e2;">[e, f]</div>
<div class="a" style="left:630.40px;top:264.20px;width:0.50px;height:2.50px;background:#666;"></div>
<div class="a" style="left:619.10px;top:266.70px;width:11.55px;height:16.30px;background:#fbfbfb;"></div>
<div class="a" style="left:630.65px;top:266.70px;width:11.55px;height:16.30px;background:linear-gradient(90deg,#eef3e2,#f8f8f2);"></div>
<div class="t" style="left:619.60px;top:267.20px;font-size:3.6px;font-weight:bold;color:#222">A</div>
<div class="a" style="left:634.05px;top:268.20px;width:7.00px;height:1.00px;background:#8a9a80;"></div>
<div class="a" style="left:634.05px;top:270.20px;width:6.00px;height:1.00px;background:#8a9a80;"></div>
<div class="a" style="left:634.05px;top:272.20px;width:5.00px;height:1.00px;background:#8a9a80;"></div>
<div class="a" style="left:634.05px;top:274.20px;width:7.00px;height:1.00px;background:#8a9a80;"></div>
<div class="a" style="left:634.05px;top:276.20px;width:6.00px;height:1.00px;background:#8a9a80;"></div>
<div class="a" style="left:634.05px;top:278.20px;width:5.00px;height:1.00px;background:#8a9a80;"></div>
<div class="a" style="left:634.05px;top:280.20px;width:7.00px;height:1.00px;background:#8a9a80;"></div>
<svg style="left:622.10px;top:264.30px" width="4" height="2.4" viewBox="0 0 4 2.4"><path d="M0 0 H4 L2 2.4 Z" fill="#e8e8e8"/></svg>
<div class="a" style="left:630.45px;top:266.7px;width:0.4px;height:16.3px;background:#d8d8d8"></div>
<div class="a" style="left:630.40px;top:283.00px;width:0.50px;height:1.60px;background:#666;"></div>
<div class="t" style="left:625.75px;top:287.75px;font-size:4.9px;color:#e2e2e2;">[g-h]</div>
<div class="a" style="left:630.40px;top:293.20px;width:0.50px;height:2.50px;background:#666;"></div>
<div class="a" style="left:619.10px;top:295.70px;width:23.10px;height:16.30px;background:#fbfbfb;"></div>
<div class="a" style="left:630.85px;top:296.30px;width:10.05px;height:7.60px;background:linear-gradient(180deg,#f1ec8e,#f4f0a8);"></div>
<div class="t" style="left:619.80px;top:296.30px;font-size:3.6px;font-weight:bold;color:#222">C</div>
<div class="t" style="left:639.40px;top:296.30px;font-size:3.6px;font-weight:bold;color:#222">C</div>
<div class="a" style="left:630.95px;top:310.00px;width:6.50px;height:1.20px;background:#555;"></div>
<div class="a" style="left:630.45px;top:295.7px;width:0.4px;height:16.3px;background:#d8d8d8"></div>
<div class="a" style="left:630.40px;top:312.00px;width:0.50px;height:1.60px;background:#666;"></div>
<div class="t" style="left:628.74px;top:316.75px;font-size:4.9px;color:#e2e2e2;">i-j</div>
<div class="a" style="left:630.40px;top:321.70px;width:0.50px;height:2.50px;background:#666;"></div>
<div class="a" style="left:619.10px;top:324.20px;width:11.55px;height:16.30px;background:linear-gradient(180deg,#98b8f2,#8aaeec);"></div>
<div class="a" style="left:620.60px;top:332.70px;width:8.55px;height:0.80px;background:#b0c8f5;"></div>
<div class="a" style="left:620.60px;top:335.20px;width:8.05px;height:0.80px;background:#b0c8f5;"></div>
<div class="a" style="left:630.65px;top:324.20px;width:11.55px;height:16.30px;background:#7aa0e6;"></div>
<div class="a" style="left:630.95px;top:324.50px;width:10.95px;height:7.20px;background:#5d8ad8;"></div>
<div class="a" style="left:619.70px;top:324.80px;width:3.2px;height:3.2px;border-radius:50%;border:0.7px solid #fff"></div>
<div class="a" style="left:638.40px;top:324.80px;width:3.2px;height:3.2px;border-radius:50%;border:0.7px solid #fff"></div>
<svg style="left:622.10px;top:321.80px" width="4" height="2.4" viewBox="0 0 4 2.4"><path d="M0 0 H4 L2 2.4 Z" fill="#e8e8e8"/></svg>
<svg style="left:635.20px;top:321.80px" width="4" height="2.4" viewBox="0 0 4 2.4"><path d="M0 0 H4 L2 2.4 Z" fill="#e8e8e8"/></svg>
<div class="a" style="left:630.45px;top:324.2px;width:0.4px;height:16.3px;background:#d8d8d8"></div>
<div class="a" style="left:630.40px;top:340.50px;width:0.50px;height:1.60px;background:#666;"></div>
<div class="a" style="left:622.40px;top:342.20px;width:15.20px;height:7.40px;background:#2b73da;"></div>
<div class="t" style="left:625.21px;top:345.25px;font-size:4.9px;color:#e2e2e2;">[1, 2]</div>
<div class="a" style="left:630.40px;top:350.10px;width:0.50px;height:2.50px;background:#666;"></div>
<div class="a" style="left:619.10px;top:352.60px;width:23.10px;height:16.30px;background:#fbfbfb;"></div>
<div class="a" style="left:619.40px;top:354.00px;width:8.20px;height:1.10px;background:#777;"></div>
<div class="a" style="left:633.70px;top:354.00px;width:8.20px;height:1.10px;background:#777;"></div>
<div class="a" style="left:619.40px;top:356.60px;width:8.20px;height:1.10px;background:#999;"></div>
<div class="a" style="left:633.70px;top:356.60px;width:8.20px;height:1.10px;background:#999;"></div>
<div class="a" style="left:619.40px;top:359.20px;width:8.20px;height:1.10px;background:#555;"></div>
<div class="a" style="left:633.70px;top:359.20px;width:8.20px;height:1.10px;background:#555;"></div>
<div class="a" style="left:619.40px;top:361.80px;width:8.20px;height:1.10px;background:#888;"></div>
<div class="a" style="left:633.70px;top:361.80px;width:8.20px;height:1.10px;background:#888;"></div>
<div class="a" style="left:619.40px;top:364.40px;width:8.20px;height:1.10px;background:#666;"></div>
<div class="a" style="left:633.70px;top:364.40px;width:8.20px;height:1.10px;background:#666;"></div>
<div class="a" style="left:619.40px;top:367.00px;width:8.20px;height:1.10px;background:#999;"></div>
<div class="a" style="left:633.70px;top:367.00px;width:8.20px;height:1.10px;background:#999;"></div>
<div class="a" style="left:620.10px;top:353.40px;width:5.00px;height:2.00px;background:#666;"></div>
<div class="a" style="left:636.20px;top:353.40px;width:5.00px;height:2.00px;background:#666;"></div>
<div class="a" style="left:630.45px;top:352.6px;width:0.4px;height:16.3px;background:#d8d8d8"></div>
<div class="a" style="left:630.40px;top:368.90px;width:0.50px;height:1.60px;background:#666;"></div>
<div class="t" style="left:627.11px;top:373.65px;font-size:4.9px;color:#e2e2e2;">3-4</div>
<div class="a" style="left:630.40px;top:378.50px;width:0.50px;height:2.50px;background:#666;"></div>
<div class="a" style="left:619.10px;top:381.00px;width:23.10px;height:7.30px;background:#fbfbfb;"></div>
<div class="a" style="left:619.60px;top:383.50px;width:8.00px;height:4.50px;background:#2a2a2a;"></div>
<div class="a" style="left:633.70px;top:383.50px;width:8.00px;height:4.50px;background:#2a2a2a;"></div>
<div class="a" style="left:621.10px;top:384.50px;width:4.00px;height:2.00px;background:#777;"></div>
<div class="a" style="left:636.20px;top:384.50px;width:4.00px;height:2.00px;background:#777;"></div>
<div class="a" style="left:630.45px;top:381px;width:0.4px;height:7.3px;background:#d8d8d8"></div>
<div class="a" style="left:580px;top:388.3px;width:108.3px;height:11.7px;background:#535353;"></div>
<div class="t" style="left:581.40px;top:392.68px;font-size:5.1px;color:#e6e6e6;letter-spacing:-0.141px;-webkit-text-stroke:0.1px #e6e6e6;">90 Pages in 45 Spreads</div>
<svg style="left:645px;top:391px" width="33" height="8" viewBox="0 0 33 8"><g stroke="#bdbdbd" fill="none" stroke-width="0.75"><path d="M1 6.5 V3 Q1 1.5 2.5 1.5 H5.5 M1 6.5 H6.5"/><path d="M2.8 5.2 L6.2 1.8" stroke-width="1.1"/><rect x="7.2" y="6" width="0.9" height="0.9" fill="#bdbdbd" stroke="none"/><rect x="14.3" y="0.8" width="5.6" height="5.6"/><path d="M17.1 2.2 V5 M15.7 3.6 H18.5"/></g><path d="M27 1.2 H32 V2 H27 Z M27.6 2.3 H31.4 V6.8 H27.6 Z M28.7 0.6 H30.3 V1.2 H28.7 Z" fill="#a8a8a8"/></svg>
</body></html>
